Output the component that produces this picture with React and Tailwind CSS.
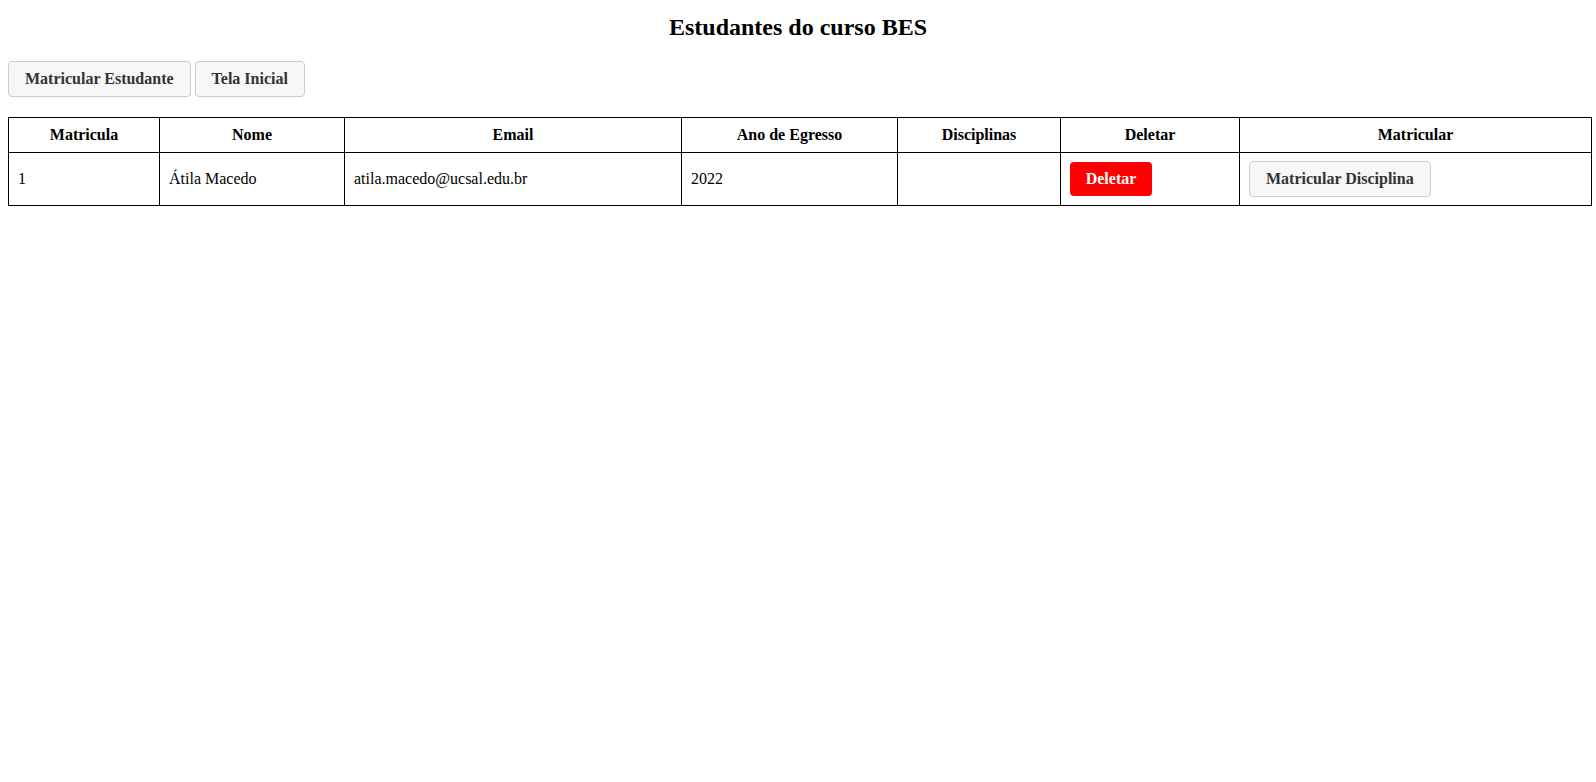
import React from "react";

const cols = [
  { label: "Matricula", w: "w-[151px]" },
  { label: "Nome", w: "w-[185px]" },
  { label: "Email", w: "w-[337px]" },
  { label: "Ano de Egresso", w: "w-[216px]" },
  { label: "Disciplinas", w: "w-[163px]" },
  { label: "Deletar", w: "w-[179px]" },
  { label: "Matricular", w: "w-[352px]" },
];

const estudantes = [
  { matricula: 1, nome: "Átila Macedo", email: "atila.macedo@ucsal.edu.br", ano: 2022 },
];

export default function App() {
  return (
    <div className="min-h-screen bg-white p-2 text-black font-['Liberation_Serif',serif]">
      <h2 className="mt-[5px] text-center text-2xl font-bold leading-7">Estudantes do curso BES</h2>

      <div className="mt-[20px] flex gap-1">
        <button className="h-9 rounded border border-[#cccccc] bg-[#f7f7f7] px-4 text-base font-bold text-[#333333]">
          Matricular Estudante
        </button>
        <button className="h-9 rounded border border-[#cccccc] bg-[#f7f7f7] px-4 text-base font-bold text-[#333333]">
          Tela Inicial
        </button>
      </div>

      <table className="mt-5 w-full table-fixed border-collapse border border-black text-base">
        <colgroup>
          {cols.map((c) => (
            <col key={c.label} className={c.w} />
          ))}
        </colgroup>
        <thead>
          <tr className="h-[35px]">
            {cols.map((c) => (
              <th key={c.label} className="border border-black px-2 text-center font-bold">
                {c.label}
              </th>
            ))}
          </tr>
        </thead>
        <tbody>
          {estudantes.map((e) => (
            <tr key={e.matricula} className="h-[53px]">
              <td className="border border-black px-[9px] text-left">{e.matricula}</td>
              <td className="border border-black px-[9px] text-left">{e.nome}</td>
              <td className="border border-black px-[9px] text-left">{e.email}</td>
              <td className="border border-black px-[9px] text-left">{e.ano}</td>
              <td className="border border-black px-[9px]"></td>
              <td className="border border-black px-[9px]">
                <button className="h-[34px] w-[82px] rounded bg-[#ff0000] text-base font-bold text-white">
                  Deletar
                </button>
              </td>
              <td className="border border-black px-[9px]">
                <button className="h-9 rounded border border-[#cccccc] bg-[#f7f7f7] px-4 text-base font-bold text-[#333333]">
                  Matricular Disciplina
                </button>
              </td>
            </tr>
          ))}
        </tbody>
      </table>
    </div>
  );
}
